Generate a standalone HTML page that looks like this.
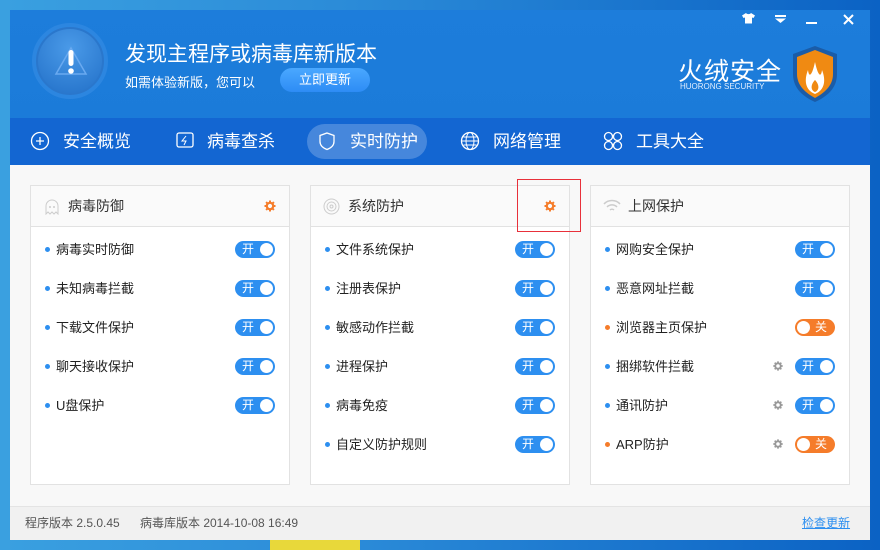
<!DOCTYPE html>
<html><head><meta charset="utf-8">
<style>
*{margin:0;padding:0;box-sizing:border-box}
body{width:880px;height:550px;overflow:hidden;position:relative;font-family:"Liberation Sans","Noto Sans CJK SC",sans-serif;background:linear-gradient(90deg,#3aa0e0 0,#2b8bd8 40%,#0b62c4 100%)}
.abs{position:absolute}
#win{left:10px;top:10px;width:860px;height:530px;background:#f8f8f8}
#head{left:0;top:0;width:860px;height:108px;background:linear-gradient(180deg,#1d7ddb,#1b7bd9)}
#nav{left:0;top:108px;width:860px;height:47px;background:#1366d2}
.navi{position:absolute;top:0;height:47px;line-height:47px;color:#fff;font-size:17px}
.pnl{position:absolute;top:175px;width:260px;height:300px;background:#fff;border:1px solid #e2e2e2}
.ph{height:41px;border-bottom:1px solid #e2e2e2;background:#fafafa;line-height:41px;font-size:14px;color:#333;padding-left:37px;position:relative}
.row{position:absolute;left:0;width:258px;height:20px;font-size:13px;color:#222;line-height:20px}
.dot{position:absolute;left:14px;top:8px;width:5px;height:5px;border-radius:50%;background:#2d8ff0}
.lbl{position:absolute;left:25px;top:1px}
.tg{position:absolute;left:204px;top:2px;width:40px;height:17px;border-radius:9px;background:#2d8ff0;color:#fff;font-size:12px;line-height:17px}
.tg i{position:absolute;top:2px;width:13px;height:13px;border-radius:50%;background:#fff}
.on span{position:absolute;left:7px}.on i{right:2px}
.off{background:#f57c2a}.off span{position:absolute;right:8px}.off i{left:2px}
.gs{position:absolute;left:181px;top:4px}
</style></head><body>
<div class="abs" style="left:270px;top:540px;width:90px;height:10px;background:#e8d83a"></div>
<div id="win" class="abs">
 <div id="head" class="abs">
  <div class="abs" style="left:22px;top:13px;width:76px;height:76px;border-radius:50%;background:#2a77cc;border:4px solid #2c86e0"></div>
  <div class="abs" style="left:28px;top:19px;width:64px;height:64px;border-radius:50%;background:radial-gradient(circle at 50% 30%,#4a9ae8,#2270c8)"></div>
  <svg class="abs" style="left:40px;top:30px" width="42" height="42" viewBox="0 0 42 42"><path d="M21 8 L36 34 H6 Z" fill="none" stroke="#6aaaf0" stroke-width="1.5"/><rect x="18.5" y="10" width="5" height="16" rx="2.5" fill="#fff"/><circle cx="21" cy="31" r="2.8" fill="#fff"/></svg>
  <div class="abs" style="left:115px;top:28px;color:#fff;font-size:21px">发现主程序或病毒库新版本</div>
  <div class="abs" style="left:115px;top:62px;color:#fff;font-size:13px">如需体验新版，您可以</div>
  <div class="abs" style="left:270px;top:58px;width:90px;height:24px;border-radius:12px;background:linear-gradient(#4aa8ff,#2d8cf5);color:#fff;font-size:13px;line-height:24px;text-align:center">立即更新</div>
  <svg class="abs" style="left:732px;top:3px" width="13" height="11"><path d="M4 0 L0 2.5 L1.5 5 L3 4.5 V10.5 H10 V4.5 L11.5 5 L13 2.5 L9 0 C8 1.5 5 1.5 4 0Z" fill="#fff"/></svg>
  <svg class="abs" style="left:765px;top:5px" width="11" height="8"><rect x="0" y="0" width="11" height="2" fill="#fff"/><path d="M0 3.5H11L5.5 8Z" fill="#fff"/></svg>
  <div class="abs" style="left:796px;top:12px;width:11px;height:2px;background:#fff"></div>
  <svg class="abs" style="left:833px;top:4px" width="11" height="11"><path d="M1 1L10 10M10 1L1 10" stroke="#fff" stroke-width="2"/></svg>
  <div class="abs" style="left:668px;top:42px;color:#fff;font-size:25px;letter-spacing:1px">火绒安全</div>
  <div class="abs" style="left:670px;top:72px;color:#e0eeff;font-size:8px">HUORONG SECURITY</div>
  <svg class="abs" style="left:780px;top:34px" width="50" height="60" viewBox="0 0 50 60"><path d="M25 2 L47 10 V30 C47 45 36 53 25 58 C14 53 3 45 3 30 V10 Z" fill="#1a5ca8"/><path d="M25 6 L43 13 V30 C43 42 34 49 25 54 C16 49 7 42 7 30 V13 Z" fill="#f08a12"/><path d="M25 50 C15 46 14 36 18 26 C19 34 22 32 25 18 C28 32 31 34 32 26 C36 36 35 46 25 50Z" fill="#fff"/><path d="M25 48 C20 46 21 40 25 36 C29 40 30 46 25 48Z" fill="#f08a12"/></svg>
 </div>
 <div id="nav" class="abs">
  <div class="navi" style="left:20px"><svg width="20" height="20" style="vertical-align:-4px"><circle cx="10" cy="10" r="8.5" fill="none" stroke="#fff" stroke-width="1.3"/><path d="M10 6v8M6 10h8" stroke="#fff" stroke-width="1.3"/></svg><span style="margin-left:13px">安全概览</span></div>
  <div class="navi" style="left:165px"><svg width="20" height="20" style="vertical-align:-4px"><rect x="2" y="2" width="16" height="14" rx="2" fill="none" stroke="#fff" stroke-width="1.3"/><path d="M11 5l-4 5h4l-2 4" stroke="#fff" fill="none"/></svg><span style="margin-left:12px">病毒查杀</span></div>
  <div class="abs" style="left:297px;top:6px;width:120px;height:35px;border-radius:18px;background:rgba(255,255,255,.22)"></div>
  <div class="navi" style="left:307px"><svg width="20" height="20" style="vertical-align:-4px"><path d="M10 2l7 2.5v6c0 4-3 6.5-7 8-4-1.5-7-4-7-8v-6z" fill="none" stroke="#fff" stroke-width="1.3"/></svg><span style="margin-left:13px">实时防护</span></div>
  <div class="navi" style="left:450px"><svg width="20" height="20" style="vertical-align:-4px"><circle cx="10" cy="10" r="8.5" fill="none" stroke="#fff" stroke-width="1.3"/><ellipse cx="10" cy="10" rx="4" ry="8.5" fill="none" stroke="#fff"/><path d="M2 10h16M3.5 6h13M3.5 14h13" stroke="#fff"/></svg><span style="margin-left:13px">网络管理</span></div>
  <div class="navi" style="left:593px"><svg width="20" height="20" style="vertical-align:-4px" fill="none" stroke="#fff" stroke-width="1.3"><circle cx="5.5" cy="5.5" r="4"/><circle cx="14.5" cy="5.5" r="4"/><circle cx="5.5" cy="14.5" r="4"/><circle cx="14.5" cy="14.5" r="4"/></svg><span style="margin-left:13px">工具大全</span></div>
 </div>

 <svg width="0" height="0" style="position:absolute"><defs><g id="gear"><circle cx="6" cy="6" r="3.2" fill="none" stroke-width="2.2"/><path d="M6 0.5V2.5M6 9.5V11.5M0.5 6H2.5M9.5 6H11.5M2.1 2.1L3.5 3.5M8.5 8.5L9.9 9.9M2.1 9.9L3.5 8.5M8.5 3.5L9.9 2.1" stroke-width="2"/></g></defs></svg>

 <div class="pnl" style="left:20px">
  <div class="ph"><svg class="abs" style="left:13px;top:12px" width="16" height="17"><path d="M2 16V8a6 6 0 0112 0v8l-2-2-2 2-2-2-2 2-2-2z" fill="none" stroke="#ccc"/><circle cx="6" cy="9" r="1" fill="#ccc"/><circle cx="10" cy="9" r="1" fill="#ccc"/></svg>病毒防御<svg class="abs" style="left:233px;top:14px" width="12" height="12" stroke="#f57c2a"><use href="#gear"/></svg></div>
  <div class="row" style="top:53px"><i class="dot"></i><span class="lbl">病毒实时防御</span><div class="tg on"><span>开</span><i></i></div></div>
  <div class="row" style="top:92px"><i class="dot"></i><span class="lbl">未知病毒拦截</span><div class="tg on"><span>开</span><i></i></div></div>
  <div class="row" style="top:131px"><i class="dot"></i><span class="lbl">下载文件保护</span><div class="tg on"><span>开</span><i></i></div></div>
  <div class="row" style="top:170px"><i class="dot"></i><span class="lbl">聊天接收保护</span><div class="tg on"><span>开</span><i></i></div></div>
  <div class="row" style="top:209px"><i class="dot"></i><span class="lbl">U盘保护</span><div class="tg on"><span>开</span><i></i></div></div>
 </div>

 <div class="pnl" style="left:300px">
  <div class="ph"><svg class="abs" style="left:12px;top:12px" width="17" height="17" fill="none" stroke="#ccc"><circle cx="8.5" cy="8.5" r="7.5"/><circle cx="8.5" cy="8.5" r="4.5"/><circle cx="8.5" cy="8.5" r="1.5"/></svg>系统防护<svg class="abs" style="left:233px;top:14px" width="12" height="12" stroke="#f57c2a"><use href="#gear"/></svg></div>
  <div class="row" style="top:53px"><i class="dot"></i><span class="lbl">文件系统保护</span><div class="tg on"><span>开</span><i></i></div></div>
  <div class="row" style="top:92px"><i class="dot"></i><span class="lbl">注册表保护</span><div class="tg on"><span>开</span><i></i></div></div>
  <div class="row" style="top:131px"><i class="dot"></i><span class="lbl">敏感动作拦截</span><div class="tg on"><span>开</span><i></i></div></div>
  <div class="row" style="top:170px"><i class="dot"></i><span class="lbl">进程保护</span><div class="tg on"><span>开</span><i></i></div></div>
  <div class="row" style="top:209px"><i class="dot"></i><span class="lbl">病毒免疫</span><div class="tg on"><span>开</span><i></i></div></div>
  <div class="row" style="top:248px"><i class="dot"></i><span class="lbl">自定义防护规则</span><div class="tg on"><span>开</span><i></i></div></div>
 </div>

 <div class="pnl" style="left:580px">
  <div class="ph"><svg class="abs" style="left:12px;top:13px" width="18" height="14" fill="none" stroke="#ccc" stroke-width="1.5"><path d="M1 5a11 11 0 0116 0M4 8a7 7 0 0110 0M7 11a3 3 0 014 0"/></svg>上网保护</div>
  <div class="row" style="top:53px"><i class="dot"></i><span class="lbl">网购安全保护</span><div class="tg on"><span>开</span><i></i></div></div>
  <div class="row" style="top:92px"><i class="dot"></i><span class="lbl">恶意网址拦截</span><div class="tg on"><span>开</span><i></i></div></div>
  <div class="row" style="top:131px"><i class="dot" style="background:#f57c2a"></i><span class="lbl">浏览器主页保护</span><div class="tg off"><span>关</span><i></i></div></div>
  <div class="row" style="top:170px"><i class="dot"></i><span class="lbl">捆绑软件拦截</span><svg class="gs" width="12" height="12" stroke="#999" style="transform:scale(.85)"><use href="#gear"/></svg><div class="tg on"><span>开</span><i></i></div></div>
  <div class="row" style="top:209px"><i class="dot"></i><span class="lbl">通讯防护</span><svg class="gs" width="12" height="12" stroke="#999" style="transform:scale(.85)"><use href="#gear"/></svg><div class="tg on"><span>开</span><i></i></div></div>
  <div class="row" style="top:248px"><i class="dot" style="background:#f57c2a"></i><span class="lbl">ARP防护</span><svg class="gs" width="12" height="12" stroke="#999" style="transform:scale(.85)"><use href="#gear"/></svg><div class="tg off"><span>关</span><i></i></div></div>
 </div>

 <div class="abs" style="left:0;top:496px;width:860px;height:34px;background:#f1f1f1;border-top:1px solid #e4e4e4;font-size:12px;color:#555;line-height:32px">
  <span class="abs" style="left:15px">程序版本 2.5.0.45</span>
  <span class="abs" style="left:130px">病毒库版本 2014-10-08 16:49</span>
  <span class="abs" style="left:792px;color:#2d8ff0;text-decoration:underline">检查更新</span>
 </div>
</div>
<div class="abs" style="left:517px;top:179px;width:64px;height:53px;border:1px solid #e8303a"></div>
</body></html>
